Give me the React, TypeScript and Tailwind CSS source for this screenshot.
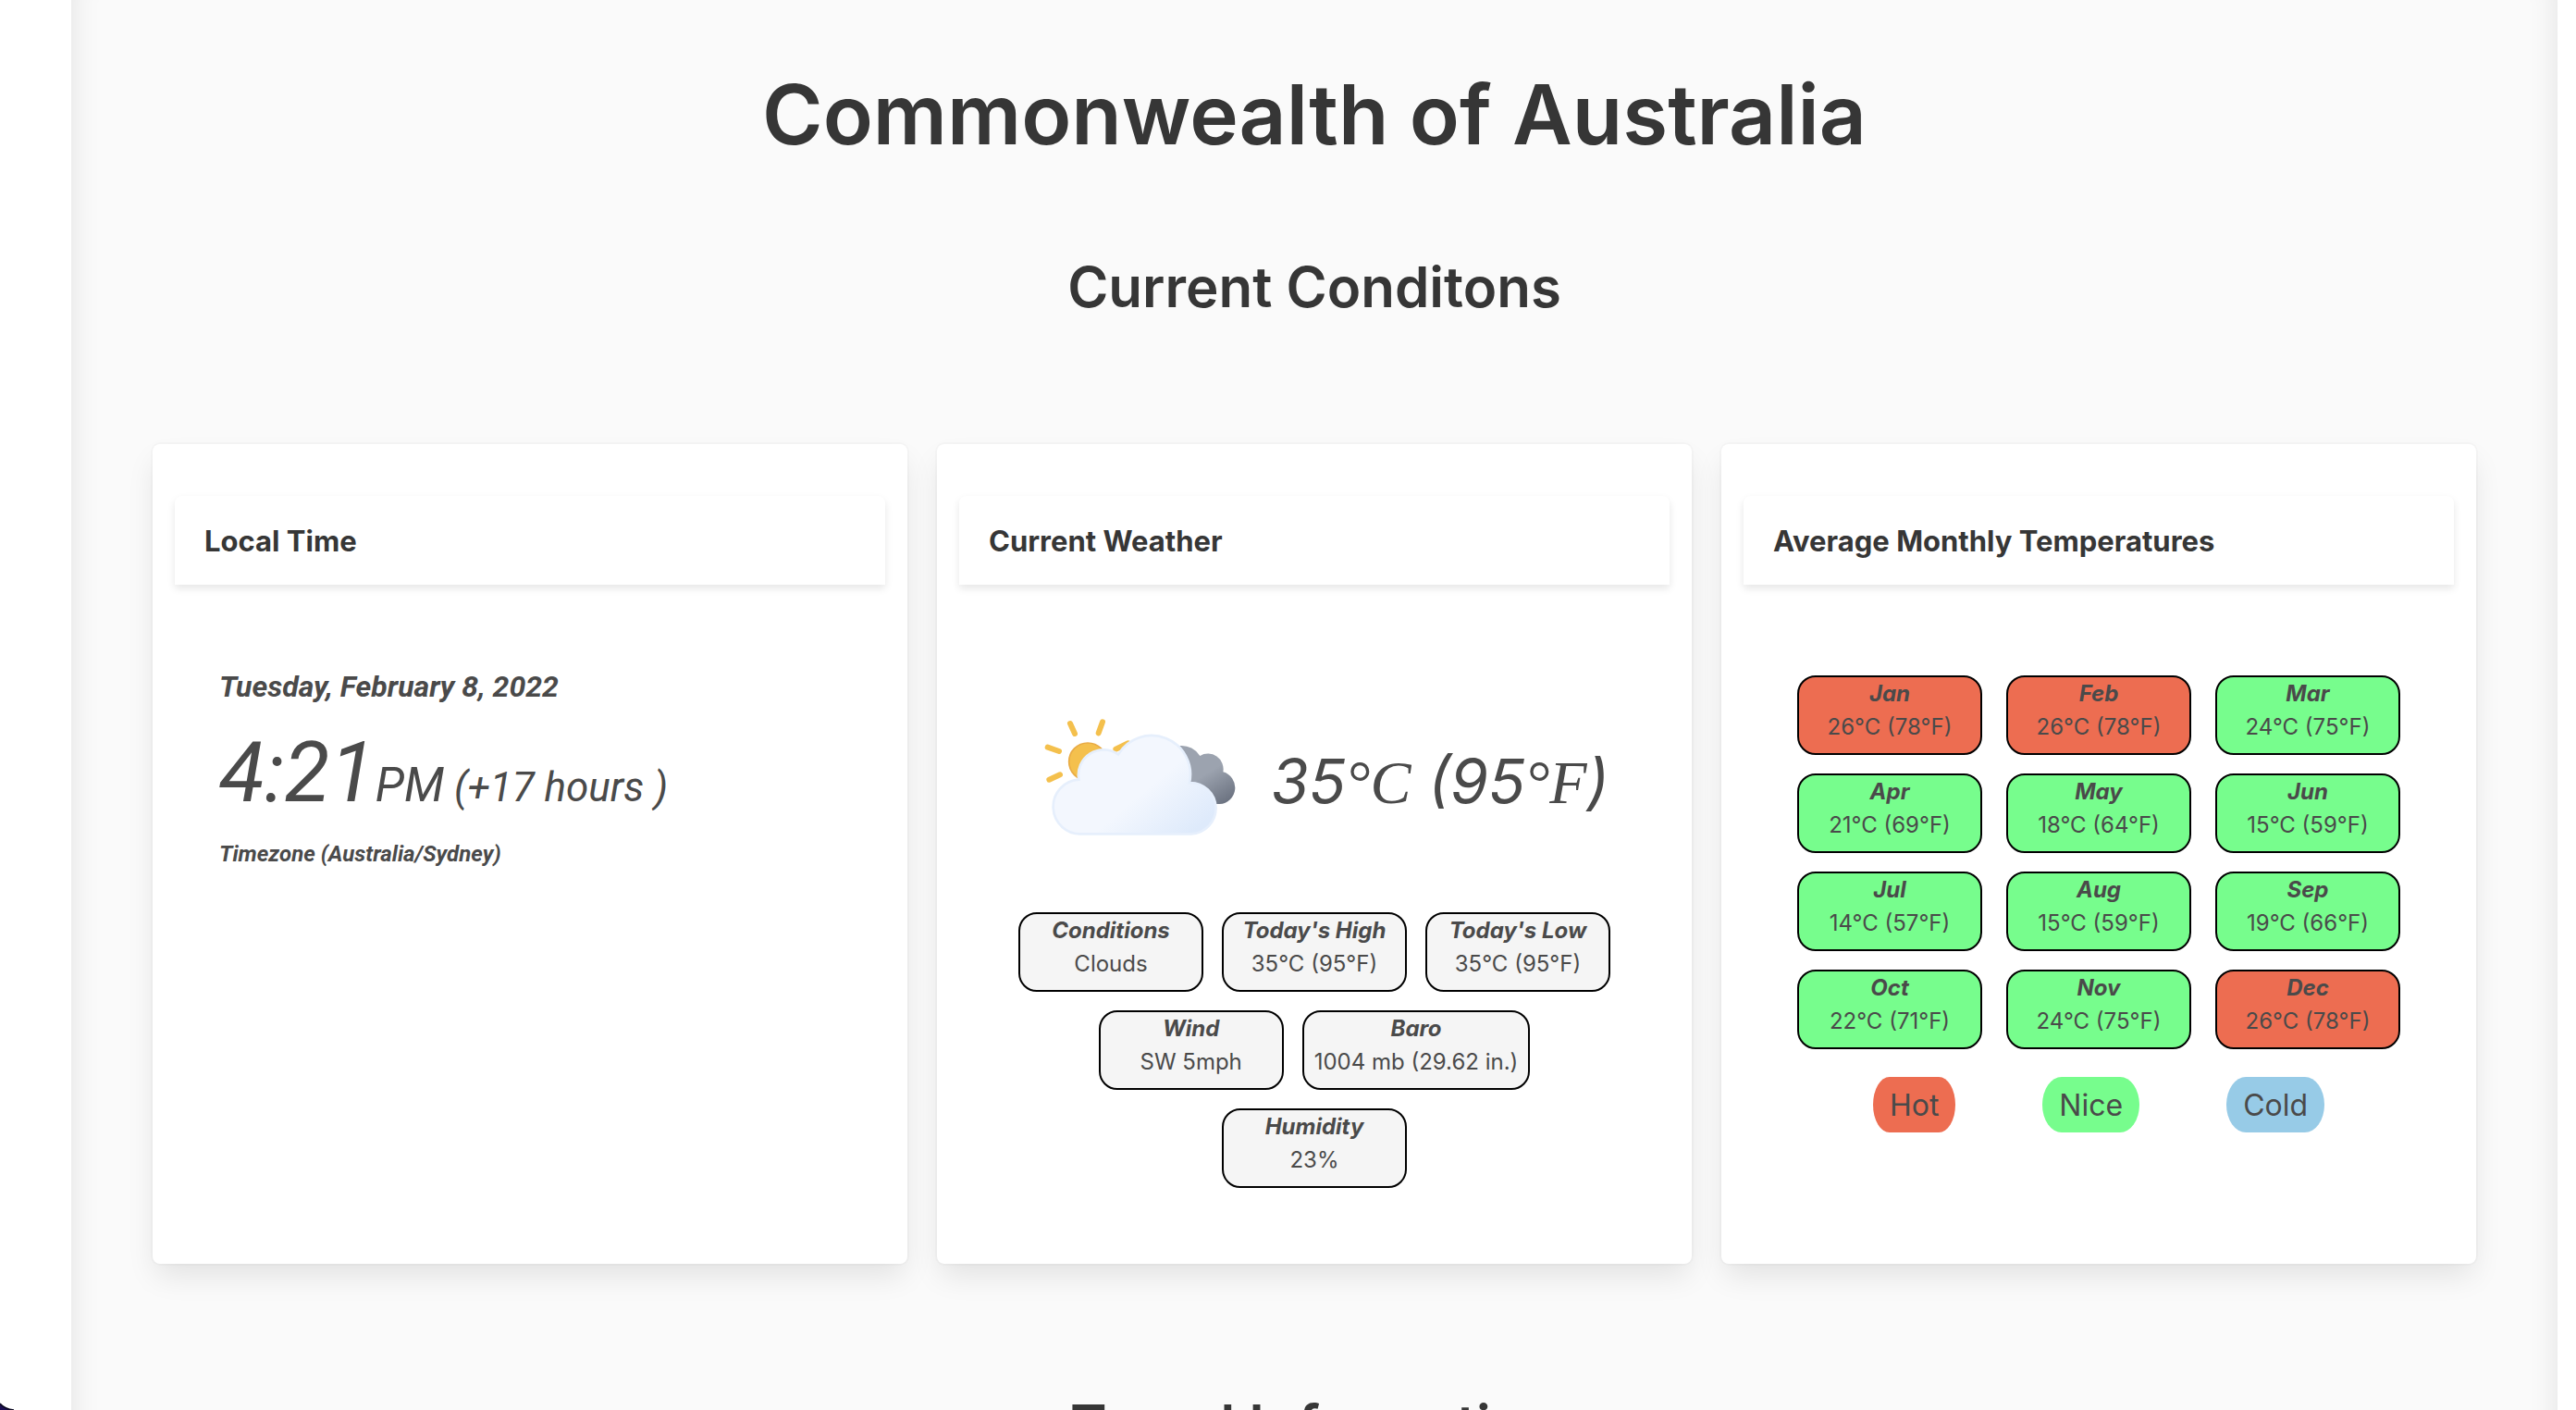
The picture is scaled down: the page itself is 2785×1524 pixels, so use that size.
import type { ReactNode } from "react";

type Mood = "hot" | "nice" | "cold";

const moodColor: Record<Mood, string> = {
  hot: "bg-[#ed6d51]",
  nice: "bg-[#77fd8d]",
  cold: "bg-[#97cbe7]",
};

const months: { name: string; temp: string; mood: Mood }[] = [
  { name: "Jan", temp: "26°C (78°F)", mood: "hot" },
  { name: "Feb", temp: "26°C (78°F)", mood: "hot" },
  { name: "Mar", temp: "24°C (75°F)", mood: "nice" },
  { name: "Apr", temp: "21°C (69°F)", mood: "nice" },
  { name: "May", temp: "18°C (64°F)", mood: "nice" },
  { name: "Jun", temp: "15°C (59°F)", mood: "nice" },
  { name: "Jul", temp: "14°C (57°F)", mood: "nice" },
  { name: "Aug", temp: "15°C (59°F)", mood: "nice" },
  { name: "Sep", temp: "19°C (66°F)", mood: "nice" },
  { name: "Oct", temp: "22°C (71°F)", mood: "nice" },
  { name: "Nov", temp: "24°C (75°F)", mood: "nice" },
  { name: "Dec", temp: "26°C (78°F)", mood: "hot" },
];

const conditions = [
  { name: "Conditions", value: "Clouds" },
  { name: "Today's High", value: "35°C (95°F)" },
  { name: "Today's Low", value: "35°C (95°F)" },
  { name: "Wind", value: "SW 5mph" },
  { name: "Baro", value: "1004 mb (29.62 in.)" },
  { name: "Humidity", value: "23%" },
];

const legend: { label: string; mood: Mood }[] = [
  { label: "Hot", mood: "hot" },
  { label: "Nice", mood: "nice" },
  { label: "Cold", mood: "cold" },
];

function Card({ title, children }: { title: string; children: ReactNode }) {
  return (
    <section className="flex flex-col rounded-lg bg-white px-6 pt-14 pb-[82px] shadow-[0_16px_32px_-4px_rgba(10,10,10,0.1),0_0_0_2px_rgba(10,10,10,0.02)]">
      <header className="rounded-t-lg px-8 pt-[25px] pb-[23px] shadow-[0_4px_8px_rgba(10,10,10,0.1)]">
        <h3 className="text-[31px] leading-12 font-bold text-[#363636]">{title}</h3>
      </header>
      {children}
    </section>
  );
}

function Tile({ name, value, color }: { name: string; value: string; color: string }) {
  return (
    <div className={`h-[86px] min-w-[200px] rounded-[20px] border-2 border-black px-[11px] text-center ${color}`}>
      <p className="text-2xl leading-9 font-bold italic">{name}</p>
      <p className="text-2xl leading-9">{value}</p>
    </div>
  );
}

function CloudIcon() {
  return (
    <svg viewBox="0 0 660 450" className="h-[150px] w-[220px]" aria-label="Broken clouds" role="img">
      <defs>
        <linearGradient id="front" x1="180" y1="120" x2="440" y2="430" gradientUnits="userSpaceOnUse">
          <stop offset="0" stopColor="#f3f7fe" />
          <stop offset="0.5" stopColor="#f3f7fe" />
          <stop offset="1" stopColor="#deeafb" />
        </linearGradient>
        <linearGradient id="back" x1="480" y1="120" x2="590" y2="300" gradientUnits="userSpaceOnUse">
          <stop offset="0" stopColor="#9ca3af" />
          <stop offset="0.45" stopColor="#9ca3af" />
          <stop offset="1" stopColor="#6b7280" />
        </linearGradient>
      </defs>
      <path
        d="M93 36l15 33M198 31l-13 36M20 113l37 13M25 218l35-16M241 119l40-19"
        stroke="#f4c04d"
        strokeWidth="18"
        strokeLinecap="round"
      />
      <circle cx="150" cy="160" r="61" fill="#f4c04d" stroke="#e9ab45" strokeWidth="5" />
      <path d="M400 297V150L450 108A70 70 0 0 1 514 141A50 50 0 0 1 589 193A53 53 0 0 1 578 297Z" fill="url(#back)" />
      <path
        d="M131 394A88 88 0 0 1 121 218A82 82 0 0 1 249 136A126 126 0 0 1 480 228A83 83 0 0 1 485 394Z"
        fill="url(#front)"
        stroke="#e6effc"
        strokeWidth="8"
      />
    </svg>
  );
}

function Unit({ children }: { children: string }) {
  return <span className="font-['Liberation_Serif',serif]">{children}</span>;
}

export default function App() {
  return (
    <div className="relative h-screen overflow-hidden bg-white pr-5 pl-[77px] font-['Inter',sans-serif] text-[#4a4a4a]">
      <main className="min-h-full bg-[#fafafa] px-[88px] pt-[62px] shadow-[inset_32px_0_32px_-32px_rgba(10,10,10,0.1),inset_-32px_0_32px_-32px_rgba(10,10,10,0.1)]">
        <h1 className="text-center text-[89px] leading-[124px] font-semibold text-[#363636]">Commonwealth of Australia</h1>
        <h2 className="mt-[84px] text-center text-[60px] leading-[80px] font-semibold text-[#363636]">Current Conditons</h2>
        <div className="mt-[130px] grid grid-cols-3 gap-8">
          <Card title="Local Time">
            <div className="px-12 pt-[86px] font-['Roboto',sans-serif] italic">
              <p className="text-[32px] leading-12 font-bold">Tuesday, February 8, 2022</p>
              <p className="mt-4 text-[90px] leading-[108px]">
                4:21<span className="text-[51px]">PM</span>
                <span className="text-[44px]"> (+17 hours )</span>
              </p>
              <p className="text-2xl leading-9 font-bold">Timezone (Australia/Sydney)</p>
            </div>
          </Card>
          <Card title="Current Weather">
            <div className="mt-[138px] flex items-center justify-center gap-7 pl-6">
              <CloudIcon />
              <p className="text-[66px] leading-[108px] whitespace-nowrap italic">
                35<Unit>°C</Unit> (95<Unit>°F</Unit>)
              </p>
            </div>
            <div className="mx-auto mt-[66px] flex max-w-[680px] flex-wrap justify-center gap-5">
              {conditions.map((c) => (
                <Tile key={c.name} name={c.name} value={c.value} color="bg-[#f5f5f5]" />
              ))}
            </div>
          </Card>
          <Card title="Average Monthly Temperatures">
            <div className="mt-[98px] grid grid-cols-[repeat(3,200px)] justify-center gap-x-[26px] gap-y-5">
              {months.map((m) => (
                <Tile key={m.name} name={m.name} value={m.temp} color={moodColor[m.mood]} />
              ))}
            </div>
            <ul className="mt-[30px] flex justify-center gap-[94px]">
              {legend.map((l) => (
                <li key={l.label} className={`rounded-[20%/50%] px-[18px] pt-[7px] pb-[5px] text-[32px] leading-12 ${moodColor[l.mood]}`}>
                  {l.label}
                </li>
              ))}
            </ul>
          </Card>
        </div>
        <h2 className="mt-[134px] text-center text-[60px] leading-[80px] font-semibold text-[#363636]">Travel Information</h2>
      </main>
      <svg viewBox="0 0 16 8" className="absolute bottom-0 left-0 h-2 w-4" aria-hidden="true">
        <path d="M0 1Q5 7 15 8H0z" fill="#1c0f52" />
        <path d="M0 1Q5 7 15 8" fill="none" stroke="#0b0820" strokeWidth="1.5" />
      </svg>
    </div>
  );
}
